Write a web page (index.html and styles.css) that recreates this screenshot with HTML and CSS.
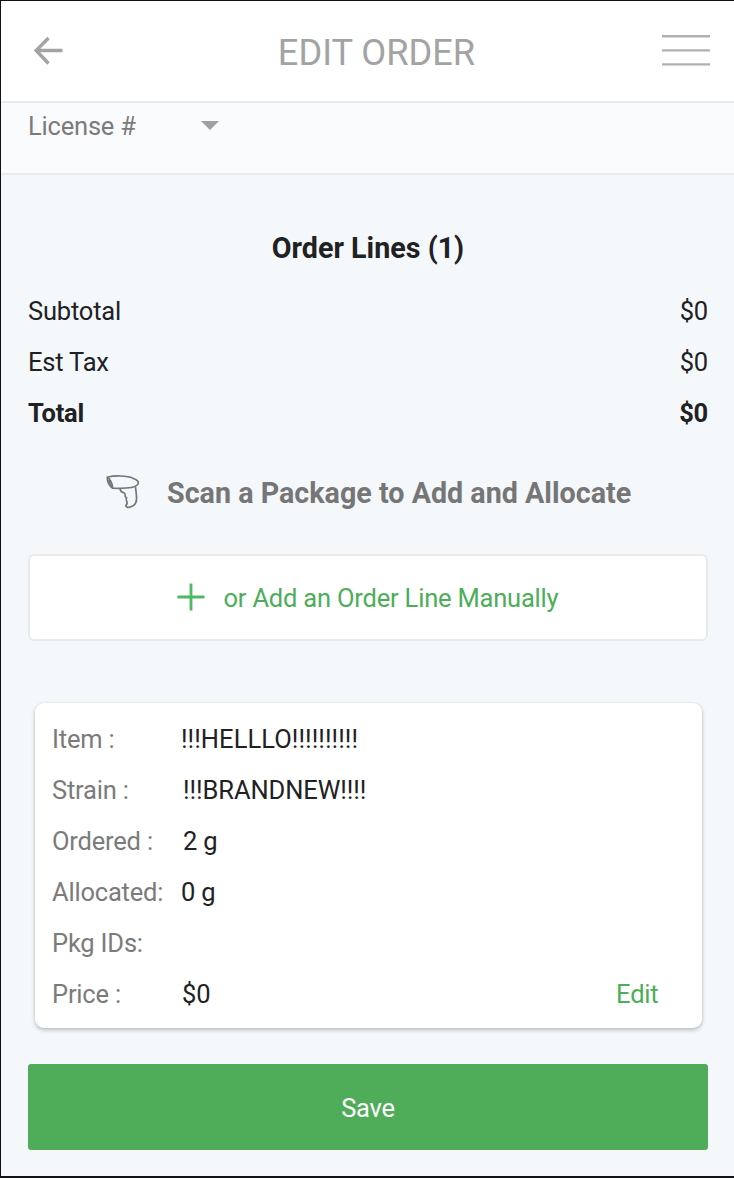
FILE: index.html
```html
<!DOCTYPE html>
<html lang="en">
<head>
<meta charset="utf-8">
<meta name="viewport" content="width=device-width, initial-scale=1.0">
<title>Edit Order</title>
<link rel="stylesheet" href="styles.css">
</head>
<body>
<div class="screen">
  <header class="header">
    <svg class="back" width="30" height="30" viewBox="0 0 30 30">
      <path d="M29.500 14.500H4M15.500 2L3.200 14.500L15.500 27.500" />
    </svg>
    <h1 class="title">EDIT ORDER</h1>
    <svg class="menu" width="48" height="33" viewBox="0 0 48 33">
      <path d="M0 2.2H48M0 16.4H48M0 30.4H48" />
    </svg>
  </header>

  <div class="license">
    <span>License #</span>
    <svg class="caret" width="18" height="9" viewBox="0 0 18 9"><path d="M0 0H18L9 9Z" /></svg>
  </div>

  <main class="content">
    <h2 class="heading">Order Lines (1)</h2>
    <div class="totals">
      <div class="total-row"><span>Subtotal</span><span>$0</span></div>
      <div class="total-row"><span>Est Tax</span><span>$0</span></div>
      <div class="total-row bold"><span>Total</span><span>$0</span></div>
    </div>

    <div class="scan">
      <svg class="scanner" width="36" height="36" viewBox="0 0 36 36">
        <path d="M2.2 3.3C9 1.3 22 1.5 28 4.2C33.500 6.500 34.500 8.500 32.500 10.800C30 13.800 22 14.800 7.500 14.200C4 11.500 2.300 7.500 2.200 3.300Z" />
        <path d="M2.500 3.500C5.200 5 7.500 9.500 7.500 14M4 6C4.300 9 5.200 11.500 6.500 13" />
        <path d="M15 14.500C15.500 17 16 18.600 18.800 18.700C21.500 19.500 18.500 22 21.600 24C19.500 26.500 24.500 28 20.800 31.800C21.500 34.500 25.500 33.300 28.500 31.500C33 28.500 31.500 22 30.500 13.200" />
      </svg>
      <span>Scan a Package to Add and Allocate</span>
    </div>

    <button class="btn add">
      <svg class="plus" width="28" height="28" viewBox="0 0 28 28"><path d="M0.500 14H27.500M14 0.500V27.500" /></svg>
      <span>or Add an Order Line Manually</span>
    </button>

    <div class="card">
      <div class="line"><span class="label">Item :</span><span class="item">!!!HELLLO!!!!!!!!!!</span></div>
      <div class="line"><span class="label">Strain :</span><span class="strain">!!!BRANDNEW!!!!</span></div>
      <div class="line"><span class="label">Ordered :</span><span class="nudge">2 g</span></div>
      <div class="line"><span class="label">Allocated:</span><span>0 g</span></div>
      <div class="line"><span class="label">Pkg IDs:</span><span></span></div>
      <div class="line"><span class="label">Price :</span><span class="price">$0</span><a class="edit">Edit</a></div>
    </div>

    <button class="btn save">Save</button>
  </main>
</div>
</body>
</html>
```

FILE: styles.css
```css
* {
  box-sizing: border-box;
}

body {
  margin: 0;
  font-family: Roboto, "Liberation Sans", sans-serif;
  font-size: 25.5px;
  letter-spacing: -0.2px;
  color: #212124;
  background: #f4f8fb;
}

.screen {
  height: 1178px;
  border: solid #121216;
  border-width: 1px 0 2px 1px;
  overflow: hidden;
}

svg {
  display: block;
  fill: none;
  flex: none;
}

.header {
  display: flex;
  align-items: center;
  justify-content: space-between;
  height: 101.6px;
  padding: 0 24px 0 32px;
  background: #fff;
  border-bottom: 2px solid #e9eaec;
}

.back {
  stroke: #a3a3a3;
  stroke-width: 3.4;
}

.title {
  margin: 3px 0 0 28px;
  font-size: 36.2px;
  letter-spacing: 0;
  font-weight: 400;
  color: #a3a3a3;
}

.menu {
  stroke: #b0b0b0;
  stroke-width: 2.4;
}

.license {
  display: flex;
  align-items: flex-start;
  height: 72px;
  padding: 8px 27px 0;
  line-height: 30px;
  color: #7b7b7b;
  background: #fafbfd;
  border-bottom: 2px solid #e9eaec;
}

.caret {
  margin: 10px 0 0 65px;
  fill: #a0a0a0;
}

.content {
  padding: 56.4px 26px 0 27px;
}

.heading {
  margin: 0 0 21px;
  font-size: 28.7px;
  letter-spacing: 0;
  line-height: 34px;
  font-weight: 700;
  text-align: center;
}

.total-row {
  display: flex;
  justify-content: space-between;
  line-height: 51px;
}

.bold {
  font-weight: 700;
}

.scan {
  display: flex;
  align-items: center;
  height: 36px;
  margin-top: 35px;
  padding-left: 77px;
  gap: 26px;
  font-size: 28.7px;
  letter-spacing: 0;
  font-weight: 700;
  color: #767676;
}

.scan span {
  padding-top: 2px;
}

.scanner {
  stroke: #767676;
  stroke-width: 1.7;
  stroke-linejoin: round;
}

.btn {
  display: flex;
  align-items: center;
  justify-content: center;
  width: 100%;
  padding: 0;
  font: inherit;
  letter-spacing: inherit;
}

.add {
  height: 87px;
  margin-top: 44px;
  padding-top: 1px;
  gap: 18px;
  color: #4cae58;
  background: #fff;
  border: 2px solid #e8e9ea;
  border-radius: 6px;
}

.plus {
  margin-top: -2px;
  stroke: #4cba63;
  stroke-width: 2.8;
}

.card {
  height: 325px;
  margin: 62px 6.500px 0 6.500px;
  padding: 11px 17px 0 17.500px;
  background: #fff;
  border-radius: 9px;
  box-shadow: 0 2px 4px rgba(0, 0, 0, 0.24), 0 0 2px rgba(0, 0, 0, 0.08);
}

.line {
  display: flex;
  line-height: 51px;
}

.label {
  width: 129px;
  color: #7b7b7b;
}

.item {
  letter-spacing: 0.05px;
}

.nudge {
  padding-left: 2px;
}

.strain {
  padding-left: 2px;
  letter-spacing: -0.08px;
}

.price {
  padding-left: 1px;
}

.edit {
  margin: 0 26px 0 auto;
  color: #4cae58;
}

.save {
  height: 86px;
  margin-top: 36px;
  padding-top: 2px;
  color: #fff;
  background: #4fad5a;
  border: 0;
  border-radius: 3px;
}
```
